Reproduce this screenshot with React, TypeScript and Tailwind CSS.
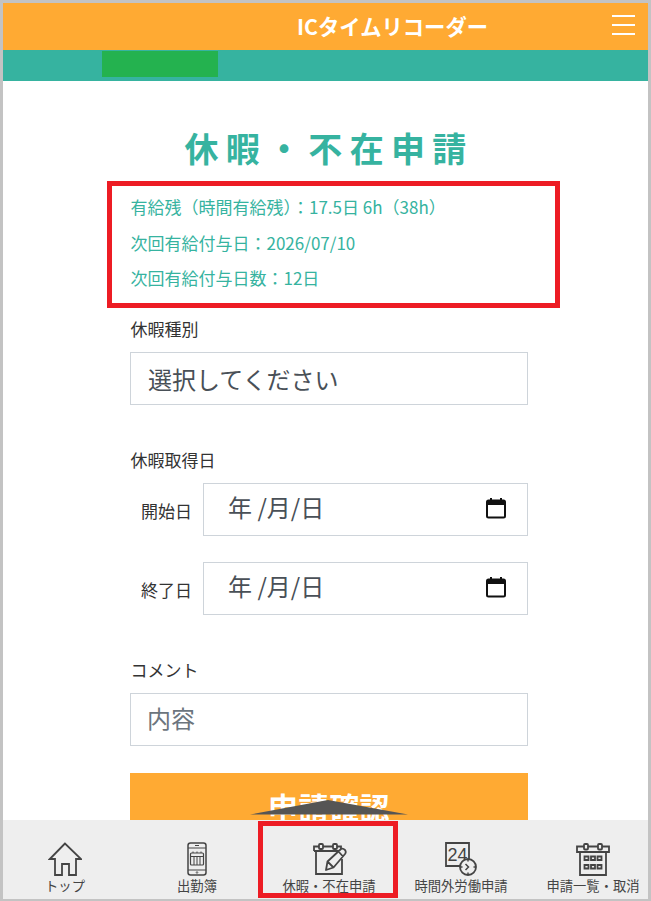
const jp = "font-['Noto_Sans_CJK_JP','Noto_Sans',sans-serif]";

function DateField({ label }: { label: string }) {
  return (
    <div className="flex items-center">
      <span className="w-[73px] pr-[11px] pt-[2px] text-right text-[17px] leading-[24px] text-[#333333]">{label}</span>
      <div className="flex h-[53px] flex-1 items-center justify-between border border-[#ced4da] pl-[24px] pr-[20px] text-[24px] text-[#495057]">
        <span className="mb-[6px]">年 /月/日</span>
        <svg className="mb-[4px]" width="22" height="24" viewBox="0 0 22 24" fill="none">
          <rect x="2" y="4.5" width="18" height="17" rx="1.5" stroke="#111" strokeWidth="2" />
          <rect x="2" y="4" width="18" height="5" fill="#111" />
          <rect x="5" y="2" width="2" height="3" fill="#111" />
          <rect x="15" y="2" width="2" height="3" fill="#111" />
        </svg>
      </div>
    </div>
  );
}

function NavItem({ label, children }: { label: string; children: React.ReactNode }) {
  return (
    <div className="flex w-[132px] shrink-0 flex-col items-center">
      <div className="flex h-[36px] items-end">{children}</div>
      <span className="mt-[1px] whitespace-nowrap text-[13.3px] leading-[18px] text-[#444444]">{label}</span>
    </div>
  );
}

const stroke = { fill: "none", stroke: "#444", strokeWidth: 1.8 } as const;

export default function App() {
  return (
    <div className={`${jp} relative h-[901px] w-[651px] overflow-hidden border-[3px] border-b-2 border-[#c3c3c3] bg-white`}>
      <header className="flex h-[47px] items-center justify-end bg-[#ffaa33] pr-[13px]">
        <span className="mb-[2px] mr-[124px] text-[21.3px] font-bold text-white">ICタイムリコーダー</span>
        <div className="mb-[3px] flex h-[20px] w-[23px] flex-col justify-between">
          <span className="h-[2px] bg-white" />
          <span className="h-[2px] bg-white" />
          <span className="h-[2px] bg-white" />
        </div>
      </header>
      <div className="h-[31px] bg-[#36b3a0] pl-[99px] pt-[1px]">
        <div className="h-[26px] w-[116px] bg-[#24b24f]" />
      </div>

      <main className="ml-[127px] w-[398px]">
        <h1 className="mt-[43px] text-center text-[34px] font-bold leading-[48px] tracking-[7.3px] text-[#36b3a0]">休暇・不在申請</h1>
        <div className="mt-[23px] flex flex-col gap-[11.5px] pl-[0.5px] text-[17px] leading-[24px] text-[#36b3a0]">
          <p>有給残（時間有給残）：17.5日 6h（38h）</p>
          <p>次回有給付与日：2026/07/10</p>
          <p>次回有給付与日数：12日</p>
        </div>

        <p className="mt-[27px] pl-[0.5px] text-[17px] leading-[24px] text-[#333333]">休暇種別</p>
        <div className="mt-[11px] flex h-[53px] items-center border border-[#ced4da] pl-[17px] text-[24px] text-[#495057]">選択してください</div>

        <p className="mt-[43px] pl-[0.5px] text-[17px] leading-[24px] text-[#333333]">休暇取得日</p>
        <div className="mt-[11px] flex flex-col gap-[26px]">
          <DateField label="開始日" />
          <DateField label="終了日" />
        </div>

        <p className="mt-[43px] pl-[0.5px] text-[17px] leading-[24px] text-[#333333]">コメント</p>
        <div className="mt-[11px] flex h-[53px] items-center border border-[#ced4da] pb-[3px] pl-[16px] text-[24px] text-[#6c757d]">内容</div>

        <div className="mt-[27px] flex h-[70px] items-center justify-center bg-[#ffaa33] pb-[4px] text-[30px] font-bold tracking-[0.5px] text-white">申請確認</div>
      </main>

      {/* annotation frames and overlays */}
      <div className="absolute left-[104px] top-[178px] h-[127px] w-[453px] border-[5px] border-[#ed1c24]" />
      <svg className="absolute left-[247px] top-[797px]" width="158" height="15" viewBox="0 0 158 15">
        <polygon points="0,14.5 78,0 158,14.5" fill="#555555" />
      </svg>

      <nav className="absolute bottom-0 left-0 right-0 h-[79px] overflow-hidden bg-[#eeeeee] pt-[20px]">
        <div className="-ml-[4px] flex">
          <NavItem label="トップ">
            <svg width="34" height="34" viewBox="-1 -1 34 34" {...stroke}>
              <path d="M16 0.5 L0.8 16 H6 V32 H13 V21 H20 V32 H27 V16 H32 Z" strokeLinejoin="miter" />
            </svg>
          </NavItem>
          <NavItem label="出勤簿">
            <svg width="20" height="34" viewBox="0 0 20 34" {...stroke}>
              <rect x="1" y="1" width="18" height="32" rx="2.5" strokeWidth="1.5" />
              <path d="M1 6 H19 M1 28 H19" strokeWidth="1.2" />
              <path d="M8 3.5 H12" strokeWidth="1" />
              <circle cx="10" cy="30.5" r="0.8" strokeWidth="0.8" />
              <rect x="3.5" y="11" width="13" height="12" rx="1" strokeWidth="1.2" />
              <path d="M3.5 14.5 H16.5 M7 14.5 V23 M10 14.5 V23 M13 14.5 V23 M6 9.5 V11 M10 9.5 V11 M14 9.5 V11" strokeWidth="1" />
            </svg>
          </NavItem>
          <NavItem label="休暇・不在申請">
            <svg width="34" height="34" viewBox="0 0 34 34" className="ml-[1px]" {...stroke}>
              <path d="M29 17 V32 H3 V9" />
              <path d="M1 9 V4.5 H28 V9 H22 M22 9 H1" />
              <rect x="6" y="2" width="4" height="5" rx="1" fill="#eeeeee" />
              <rect x="20" y="2" width="4" height="5" rx="1" fill="#eeeeee" />
              <path d="M13 28 L14.5 19.5 L28 7 Q30 6 32 8 Q33.5 10 32 12 L20.5 25.5 Z M14.5 19.5 L20.5 25.5 M25.5 9.5 L30 14.5" fill="#eeeeee" strokeLinejoin="round" />
            </svg>
          </NavItem>
          <NavItem label="時間外労働申請">
            <svg width="34" height="34" viewBox="0 0 34 34" className="ml-[1px]" {...stroke}>
              <path d="M1 1 H24 V24 H1 Z" />
              <text x="2.5" y="18.5" fill="#444" stroke="none" fontSize="18" fontFamily="Liberation Sans">24</text>
              <circle cx="23" cy="25" r="8" fill="#eeeeee" />
              <path d="M20.5 22 L23.5 25 L20.5 28 M23 17.5 V19.5 M23 30.5 V32.5 M15.5 25 H17.5 M28.5 25 H30.5" strokeWidth="1.5" />
            </svg>
          </NavItem>
          <NavItem label="申請一覧・取消">
            <svg width="34" height="34" viewBox="0 0 34 34" {...stroke}>
              <path d="M1 4.5 H33 V10 H1 Z" />
              <path d="M4 10 V33 H30 V10" />
              <rect x="8" y="2" width="4" height="5.5" rx="1" fill="#eeeeee" />
              <rect x="22" y="2" width="4" height="5.5" rx="1" fill="#eeeeee" />
              <path d="M8.5 14.5h4v3.5h-4z M15 14.5h4v3.5h-4z M21.5 14.5h4v3.5h-4z M8.5 23h4v3.5h-4z M15 23h4v3.5h-4z M21.5 23h4v3.5h-4z" />
            </svg>
          </NavItem>
        </div>
      </nav>
      <div className="absolute left-[255px] top-[818px] h-[77px] w-[140px] border-[5px] border-[#ed1c24]" />
    </div>
  );
}
